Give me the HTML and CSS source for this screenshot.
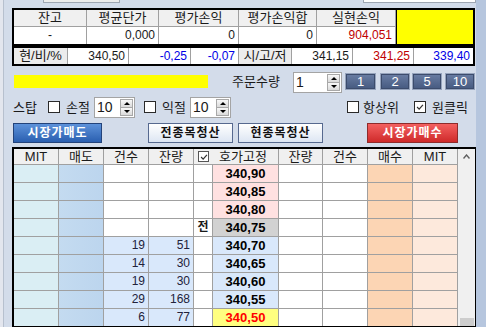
FILE: index.html
```html
<!DOCTYPE html>
<html lang="ko">
<head>
  <meta charset="UTF-8">
  <title>주문창</title>
  <link rel="stylesheet" href="styles.css">
</head>
<body>
<div class="window">
  <div class="edge-left"></div>

  <div class="main">
    <div class="top-stub">
      <div class="stub stub-left"></div>
      <div class="stub stub-right"></div>
    </div>

    <!-- 잔고 요약 -->
    <div class="summary">
      <div class="hd">잔고</div>
      <div class="hd">평균단가</div>
      <div class="hd">평가손익</div>
      <div class="hd">평가손익합</div>
      <div class="hd">실현손익</div>
      <div class="alert"></div>
      <div class="cell center">-</div>
      <div class="cell">0,000</div>
      <div class="cell">0</div>
      <div class="cell">0</div>
      <div class="cell red">904,051</div>
    </div>

    <!-- 현재가 -->
    <div class="quote">
      <div class="lbl">현/비/%</div>
      <div class="cell">340,50</div>
      <div class="cell blue">-0,25</div>
      <div class="cell blue">-0,07</div>
      <div class="lbl">시/고/저</div>
      <div class="cell">341,15</div>
      <div class="cell red">341,25</div>
      <div class="cell blue">339,40</div>
    </div>

    <div class="row row-a">
      <div class="msg-bar"></div>
      <div class="label qty-label">주문수량</div>
      <div class="spin spin-qty">
        <span class="spin-val">1</span>
        <span class="spin-btn"><i class="up"></i><i class="dn"></i></span>
      </div>
      <div class="qty q1">1</div>
      <div class="qty q2">2</div>
      <div class="qty q3">5</div>
      <div class="qty q4">10</div>
    </div>

    <div class="row row-b">
      <div class="label stop-label">스탑</div>
      <div class="chk chk-loss"></div>
      <div class="label opt-label loss-label">손절</div>
      <div class="spin spin-small spin-loss">
        <span class="spin-val">10</span>
        <span class="spin-btn"><i class="up"></i><i class="dn"></i></span>
      </div>
      <div class="chk chk-profit"></div>
      <div class="label opt-label profit-label">익절</div>
      <div class="spin spin-small spin-profit">
        <span class="spin-val">10</span>
        <span class="spin-btn"><i class="up"></i><i class="dn"></i></span>
      </div>
      <div class="chk chk-top"></div>
      <div class="label opt-label top-label">항상위</div>
      <div class="chk chk-one on"><svg viewBox="0 0 12 12"><polyline points="2.5,6 5,8.5 9.5,3.5" /></svg></div>
      <div class="label opt-label">원클릭</div>
    </div>

    <div class="row row-c">
      <div class="btn btn-sell">시장가매도</div>
      <div class="btn btn-clear clear-all">전종목청산</div>
      <div class="btn btn-clear clear-one">현종목청산</div>
      <div class="btn btn-buy">시장가매수</div>
    </div>

    <!-- 호가창 -->
    <div class="book">
      <div class="grid">
        <div class="h">MIT</div>
        <div class="h">매도</div>
        <div class="h">건수</div>
        <div class="h">잔량</div>
        <div class="h h-fix"><span class="chk chk-fix on"><svg viewBox="0 0 12 12"><polyline points="2.5,6 5,8.5 9.5,3.5" /></svg></span>호가고정</div>
        <div class="h">잔량</div>
        <div class="h">건수</div>
        <div class="h">매수</div>
        <div class="h">MIT</div>

        <div class="mit-s"></div><div class="sell"></div><div class="n"></div><div class="n"></div><div class="fx"></div><div class="p ask">340,90</div><div class="n"></div><div class="n"></div><div class="buy"></div><div class="mit-b"></div>
        <div class="mit-s"></div><div class="sell"></div><div class="n"></div><div class="n"></div><div class="fx"></div><div class="p ask">340,85</div><div class="n"></div><div class="n"></div><div class="buy"></div><div class="mit-b"></div>
        <div class="mit-s"></div><div class="sell"></div><div class="n"></div><div class="n"></div><div class="fx"></div><div class="p ask">340,80</div><div class="n"></div><div class="n"></div><div class="buy"></div><div class="mit-b"></div>
        <div class="mit-s"></div><div class="sell"></div><div class="n"></div><div class="n"></div><div class="fx">전</div><div class="p mid">340,75</div><div class="n"></div><div class="n"></div><div class="buy"></div><div class="mit-b"></div>
        <div class="mit-s"></div><div class="sell"></div><div class="n bid">19</div><div class="n bid">51</div><div class="fx"></div><div class="p bidp">340,70</div><div class="n"></div><div class="n"></div><div class="buy"></div><div class="mit-b"></div>
        <div class="mit-s"></div><div class="sell"></div><div class="n bid">14</div><div class="n bid">30</div><div class="fx"></div><div class="p bidp">340,65</div><div class="n"></div><div class="n"></div><div class="buy"></div><div class="mit-b"></div>
        <div class="mit-s"></div><div class="sell"></div><div class="n bid">19</div><div class="n bid">30</div><div class="fx"></div><div class="p bidp">340,60</div><div class="n"></div><div class="n"></div><div class="buy"></div><div class="mit-b"></div>
        <div class="mit-s"></div><div class="sell"></div><div class="n bid">29</div><div class="n bid">168</div><div class="fx"></div><div class="p bidp">340,55</div><div class="n"></div><div class="n"></div><div class="buy"></div><div class="mit-b"></div>
        <div class="mit-s"></div><div class="sell"></div><div class="n bid">6</div><div class="n bid">77</div><div class="fx"></div><div class="p cur">340,50</div><div class="n"></div><div class="n"></div><div class="buy"></div><div class="mit-b"></div>
      </div>
      <div class="scroll">
        <div class="scroll-up"><svg viewBox="0 0 7 5"><polyline points="0.5,4.5 3.5,1 6.5,4.5" /></svg></div>
        <div class="scroll-track"></div>
        <div class="scroll-thumb"></div>
      </div>
    </div>
  </div>

  <div class="edge-right"></div>
</div>
</body>
</html>
```

FILE: styles.css
```css
html, body {
  margin: 0;
  padding: 0;
}

body {
  width: 486px;
  height: 327px;
  overflow: hidden;
  background: #d3dcea;
  font-family: "Liberation Sans", "Noto Sans CJK KR", sans-serif;
  font-size: 12px;
  color: #1a1a1a;
}

.window {
  display: flex;
  height: 327px;
}

.edge-left {
  width: 3px;
  background: #e3e6ee;
  border-right: 1px solid #b7c0ce;
}

.main {
  width: 464px;
  padding-left: 8px;
}

.edge-right {
  flex: 1;
  background: #b6c6de;
}

/* cut-off controls above */
.top-stub {
  display: flex;
  height: 8px;
}

.stub {
  height: 2px;
  border-bottom: 1px solid #9ea6b2;
}

.stub-left {
  margin-left: 31px;
  width: 75px;
  background: #ececec;
  border-left: 1px solid #9ea6b2;
  border-right: 1px solid #9ea6b2;
}

.stub-right {
  margin-left: 243px;
  width: 112px;
  background: #ffffff;
  border-left: 1px solid #9ea6b2;
  border-right: 1px solid #9ea6b2;
}

/* summary tables */
.summary,
.quote {
  display: grid;
  width: max-content;
  gap: 1px;
  background: #a0a0a0;
  border: 2px solid #000;
}

.summary {
  grid-template-columns: 72px 71px 79px 77px 78px 77px;
  grid-template-rows: 16px 17px;
}

.quote {
  grid-template-columns: 53px 60px 61px 47px 52px 60px 60px 59px;
  grid-template-rows: 16px;
}

.hd {
  background: #f0f0f0;
  text-align: center;
  line-height: 16px;
  font-size: 13px;
}

.alert {
  grid-column: 6;
  grid-row: 1 / 3;
  background: #ffff00;
  border-left: 1px solid #000;
}

.cell {
  background: #fff;
  text-align: right;
  padding: 0 3px;
  line-height: 17px;
  font-size: 12px;
}

.quote .cell {
  line-height: 16px;
}

.cell.center {
  text-align: center;
}

.lbl {
  background: #ececec;
  text-align: center;
  line-height: 16px;
  font-size: 13px;
}

.red {
  color: #c00000;
}

.blue {
  color: #0000e6;
}

/* control rows */
.row {
  display: flex;
  align-items: flex-start;
}

.row-a {
  height: 28px;
}

.row-b {
  height: 27px;
}

.row-c {
  height: 26px;
}

.msg-bar {
  margin: 9px 0 0 2px;
  width: 194px;
  height: 13px;
  background: #ffff00;
}

.label {
  font-size: 13px;
  line-height: 21px;
  white-space: nowrap;
}

.qty-label {
  margin: 5px 0 0 24px;
  width: 58px;
}

.spin {
  display: flex;
  height: 21px;
  box-sizing: border-box;
  background: #fff;
  border: 1px solid #a4a4a4;
}

.spin-val {
  flex: 1;
  padding-left: 2px;
  font-size: 14px;
  line-height: 18px;
}

.spin-btn {
  width: 13px;
  display: flex;
  flex-direction: column;
  padding: 1px 1px 1px 0;
}

.spin-btn i {
  flex: 1;
  display: flex;
  align-items: center;
  justify-content: center;
  background: linear-gradient(#f8f8f8, #dadada);
  border: 1px solid #a8a8a8;
}

.spin-btn i + i {
  border-top: none;
}

.spin-btn i::after {
  content: "";
  border-left: 3px solid transparent;
  border-right: 3px solid transparent;
}

.spin-btn .up::after {
  border-bottom: 3px solid #000;
}

.spin-btn .dn::after {
  border-top: 3px solid #000;
}

.spin-qty {
  margin: 6px 0 0 3px;
  width: 49px;
}

.qty {
  margin-top: 7px;
  width: 30px;
  height: 17px;
  box-sizing: border-box;
  border: 1px solid #95a3bc;
  background: linear-gradient(#6a7ea4, #45597f);
  box-shadow: inset 0 0 0 1px #3c4c6c;
  color: #fff;
  text-align: center;
  line-height: 15px;
  font-size: 13px;
}

.q1 {
  margin-left: 3px;
  width: 31px;
}

.q2 {
  margin-left: 4px;
}

.q3 {
  margin-left: 2px;
}

.q4 {
  margin-left: 3px;
}

.stop-label {
  margin: 3px 0 0 1px;
  width: 28px;
}

.chk {
  display: block;
  width: 12px;
  height: 12px;
  box-sizing: border-box;
  border: 1px solid #2a2a2a;
  background: #fff;
  margin-top: 7px;
}

.chk svg {
  display: block;
  width: 10px;
  height: 10px;
}

.chk polyline {
  fill: none;
  stroke: #333;
  stroke-width: 1.5;
}

.chk-loss {
  margin-left: 7px;
}

.opt-label {
  margin: 3px 0 0 6px;
  width: 26px;
}

.spin-small {
  margin: 3px 0 0 2px;
  width: 41px;
}

.chk-profit {
  margin-left: 9px;
}

.chk-top {
  margin-left: 116px;
}

.top-label {
  margin-left: 4px;
  width: 40px;
}

.chk-one {
  margin-left: 11px;
}

.btn {
  margin-top: 2px;
  height: 20px;
  box-sizing: border-box;
  text-align: center;
  line-height: 18px;
  font-size: 12px;
  font-weight: bold;
  letter-spacing: 1px;
}

.btn-sell {
  margin-left: 1px;
  width: 89px;
  background: linear-gradient(#5d92da, #2a5fb0);
  border: 1px solid #23437a;
  color: #fff;
}

.btn-clear {
  width: 85px;
  background: linear-gradient(#ffffff, #dde6f3);
  border: 1px solid #56698f;
  color: #111;
}

.clear-all {
  margin-left: 46px;
}

.clear-one {
  margin-left: 5px;
}

.btn-buy {
  margin-left: 44px;
  width: 91px;
  background: linear-gradient(#f36060, #cf2a2a);
  border: 1px solid #8e2b2b;
  color: #fff;
}

/* order book */
.book {
  display: flex;
  width: 464px;
  box-sizing: border-box;
  border-top: 2px solid #000;
  border-left: 2px solid #000;
  border-right: 1px solid #000;
  border-bottom: 1px solid #000;
}

.grid {
  display: grid;
  grid-template-columns: 44px 44px 44px 44px 18px 65px 43px 44px 44px 44px;
  grid-template-rows: 15px repeat(9, 17px);
  gap: 1px;
  background: #a0a0a0;
}

.grid > div {
  line-height: 17px;
}

.grid .h {
  background: #f0f0f0;
  text-align: center;
  line-height: 15px;
  font-size: 13px;
}

.h-fix {
  grid-column: span 2;
  display: flex;
  align-items: center;
  padding-left: 4px;
}

.h-fix .chk-fix {
  margin: 0 10px 0 0;
  width: 11px;
  height: 11px;
  border-color: #555;
}

.mit-s {
  background: #daeef4;
}

.sell {
  background: linear-gradient(90deg, #c4dbf0, #bcd5ee);
}

.n {
  background: #fff;
  text-align: right;
  padding-right: 3px;
  color: #22223a;
}

.n.bid {
  background: #d9e8fb;
}

.fx {
  background: #fff;
  text-align: center;
  font-weight: bold;
  font-size: 12px;
}

.p {
  text-align: center;
  font-weight: bold;
  font-size: 13px;
  color: #000;
}

.p.ask {
  background: #ffe1e1;
}

.p.mid {
  background: #d2d2d2;
}

.p.bidp {
  background: #d9e8fb;
}

.p.cur {
  background: #ffff80;
  color: #ff0000;
}

.buy {
  background: #fcd5b4;
}

.mit-b {
  background: #fde9dc;
}

.scroll {
  width: 17px;
  border-left: 1px solid #a0a0a0;
  background: #f0f0f0;
  display: flex;
  flex-direction: column;
}

.scroll-up {
  height: 15px;
  display: flex;
  align-items: center;
  justify-content: center;
}

.scroll-up svg {
  width: 7px;
  height: 5px;
}

.scroll-up polyline {
  fill: none;
  stroke: #606060;
  stroke-width: 1.4;
}

.scroll-track {
  flex: 1;
}

.scroll-thumb {
  height: 8px;
  margin: 0 1px 0 2px;
  background: #cdcdcd;
}
```
